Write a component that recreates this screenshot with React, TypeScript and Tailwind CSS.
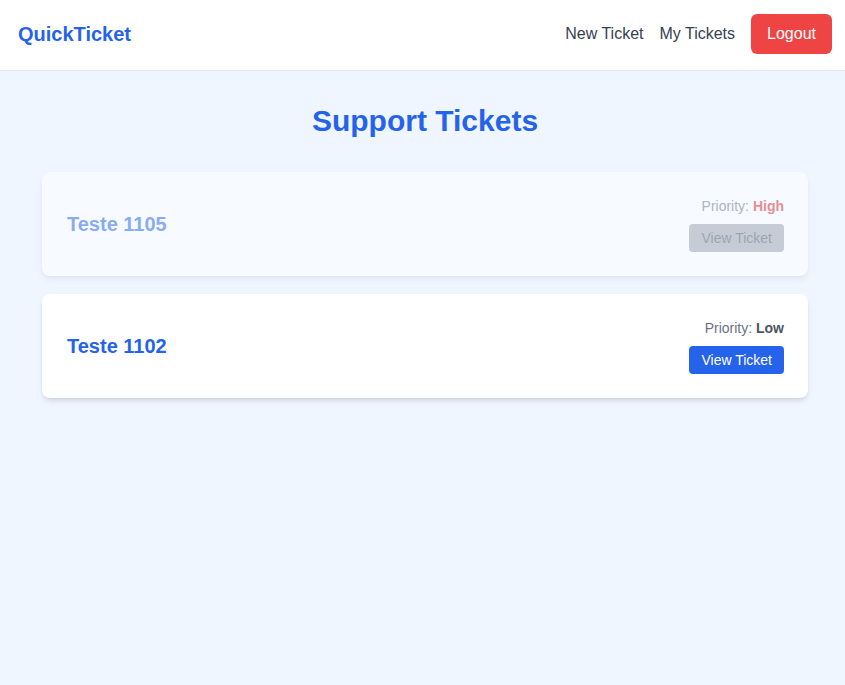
type Ticket = {
  id: number;
  title: string;
  priority: 'High' | 'Low';
  closed: boolean;
}

const tickets: Ticket[] = [
  { id: 1105, title: 'Teste 1105', priority: 'High', closed: true },
  { id: 1102, title: 'Teste 1102', priority: 'Low', closed: false },
]

function Navbar() {
  return (
    <header className="h-[71px] bg-white border-b border-[#e5e7eb] flex items-center justify-between pl-[18px] pr-[13px] pb-[2px]">
      <span className="text-xl font-bold text-[#2563eb]">QuickTicket</span>
      <nav className="flex items-center gap-4">
        <a className="text-base text-[#374151]">New Ticket</a>
        <a className="text-base text-[#374151]">My Tickets</a>
        <button className="bg-[#ef4444] text-white text-base px-4 py-2 rounded-md">Logout</button>
      </nav>
    </header>
  )
}

function TicketCard({ ticket }: { ticket: Ticket }) {
  return (
    <div
      className={`rounded-lg shadow-md bg-white py-6 pl-[25px] pr-6 flex items-center justify-between ${
        ticket.closed ? 'opacity-50' : ''
      }`}
    >
      <h2 className="text-xl font-bold text-[#2563eb]">{ticket.title}</h2>
      <div className="flex flex-col items-end gap-2">
        <span className="text-sm text-[#6b7280]">
          Priority:{' '}
          <span className={`font-bold ${ticket.priority === 'High' ? 'text-[#dc2626]' : 'text-[#4b5563]'}`}>
            {ticket.priority}
          </span>
        </span>
        {ticket.closed ? (
          <button className="text-sm px-3 py-1 rounded bg-[#9ca3af] text-[#4b5563]">View Ticket</button>
        ) : (
          <button className="text-sm px-3 py-1 rounded bg-[#2563eb] text-white">View Ticket</button>
        )}
      </div>
    </div>
  )
}

export default function App() {
  return (
    <div className="min-h-[685px] bg-[#eff6ff] font-['Liberation_Sans',Arial,sans-serif]">
      <Navbar />
      <main className="pl-[42px] pr-[37px] pt-8">
        <h1 className="text-3xl font-bold text-[#2563eb] text-center mb-[33px]">Support Tickets</h1>
        <div className="flex flex-col gap-[18px]">
          {tickets.map((t) => (
            <TicketCard key={t.id} ticket={t} />
          ))}
        </div>
      </main>
    </div>
  )
}
